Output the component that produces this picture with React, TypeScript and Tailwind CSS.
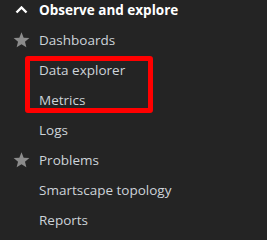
import React from 'react';

const items = [
  { label: 'Dashboards', star: true },
  { label: 'Data explorer', star: false },
  { label: 'Metrics', star: false },
  { label: 'Logs', star: false },
  { label: 'Problems', star: true },
  { label: 'Smartscape topology', star: false },
  { label: 'Reports', star: false },
];

function Star() {
  return (
    <svg width="17" height="16" viewBox="0 0 24 23" className="text-[#8c8c8c]">
      <path fill="currentColor" d="M12 0.5l3.1 7.6 8.2.6-6.3 5.3 2 8-7-4.4-7 4.4 2-8L.7 8.7l8.2-.6z" />
    </svg>
  );
}

export default function App() {
  return (
    <div className="relative w-[267px] h-[240px] overflow-hidden bg-[#242424] font-['Open_Sans',sans-serif]">
      <div className="flex h-[25px] items-center pb-[5px]">
        <div className="flex w-[39px] justify-center pl-[3px]">
          <svg width="13" height="8" viewBox="0 0 13 8">
            <path d="M1.5 6.5L6.5 1.5l5 5" fill="none" stroke="#ffffff" strokeWidth="2.4" />
          </svg>
        </div>
        <span className="text-[13.5px] font-bold text-white">Observe and explore</span>
      </div>
      {items.map((item) => (
        <div key={item.label} className="flex h-[30px] items-center">
          <div className="flex w-[39px] justify-center pl-[4px]">{item.star && <Star />}</div>
          <span className="text-[13.5px] text-[#cdd3d9]">{item.label}</span>
        </div>
      ))}
      <div className="absolute left-[25px] top-[56px] h-[57px] w-[128px] rounded-[3px] border-[5px] border-[#ff0000]" />
    </div>
  );
}
